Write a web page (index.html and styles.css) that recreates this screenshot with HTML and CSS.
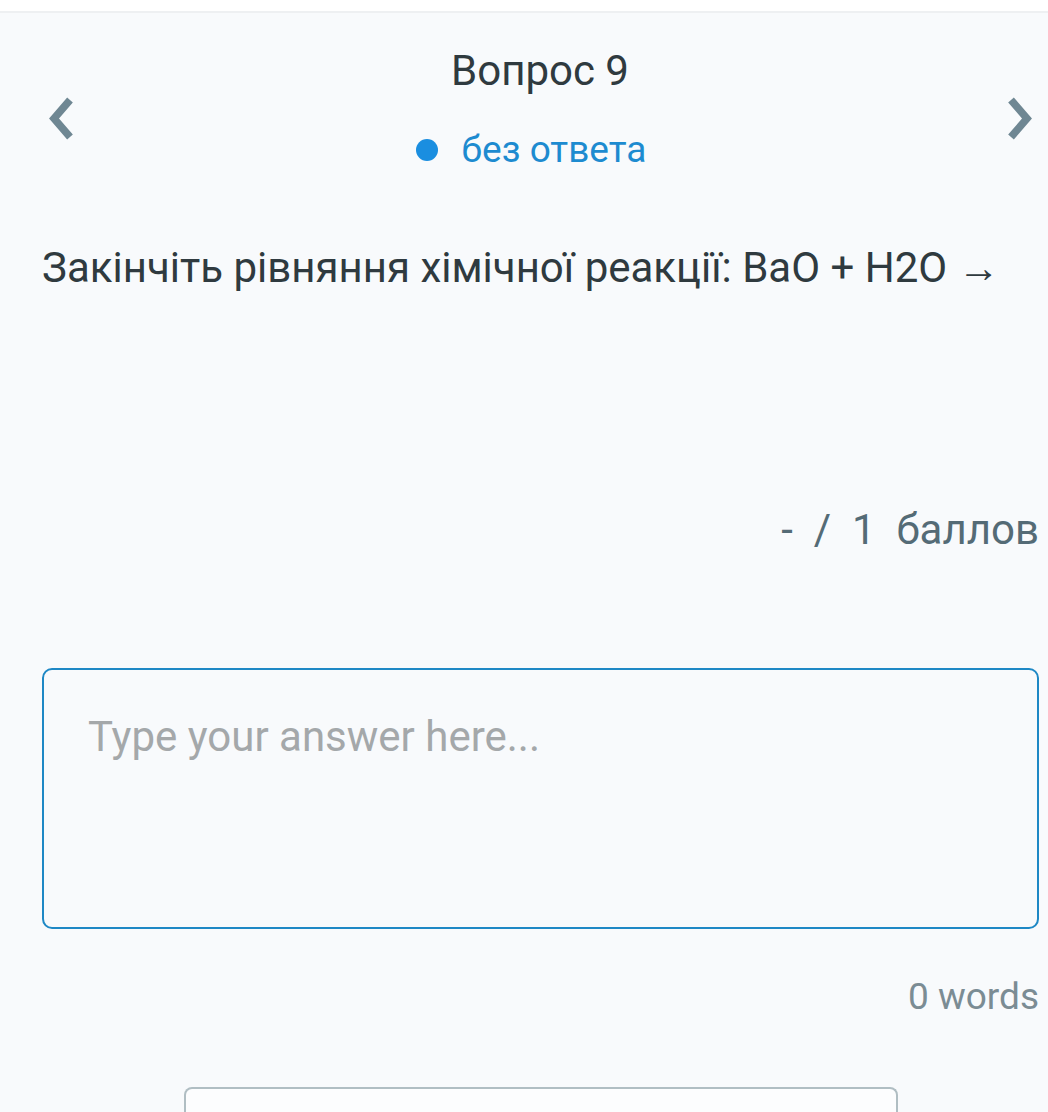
FILE: index.html
```html
<!DOCTYPE html>
<html>
<head>
<meta charset="utf-8">
<link rel="stylesheet" href="styles.css">
</head>
<body>
<div class="topbar"></div>
<main class="page">
  <div class="nav">
    <button class="arrow" aria-label="previous">
      <svg width="34" height="44" viewBox="0 0 34 44"><path d="M25 3 L9 21.5 L25 40" fill="none" stroke="#6f8793" stroke-width="7.5" stroke-linecap="butt" stroke-linejoin="miter"/></svg>
    </button>
    <div class="qhead">
      <div class="qtitle">Вопрос 9</div>
      <div class="status"><span class="dot"></span><span>без ответа</span></div>
    </div>
    <button class="arrow" aria-label="next">
      <svg width="34" height="44" viewBox="0 0 34 44"><path d="M10 3 L26 21.5 L10 40" fill="none" stroke="#6f8793" stroke-width="7.5" stroke-linecap="butt" stroke-linejoin="miter"/></svg>
    </button>
  </div>
  <p class="question">Закінчіть рівняння хімічної реакції: ВаО + Н2О →</p>
  <div class="points">-&nbsp;&nbsp;/&nbsp;&nbsp;1&nbsp;&nbsp;баллов</div>
  <div class="answer"><span class="placeholder">Type your answer here...</span></div>
  <div class="words">0 words</div>
  <div class="btnrow"><div class="submit"></div></div>
</main>
</body>
</html>
```
FILE: styles.css
```css
html, body {
  margin: 0;
  padding: 0;
  background: #f8fafc;
  font-family: Roboto, "Noto Sans", sans-serif;
  overflow: hidden;
}
.topbar {
  height: 11px;
  background: #ffffff;
  border-bottom: 2px solid #eef0f2;
}
.page {
  padding: 0 9px 0 42px;
}
.nav {
  display: flex;
  justify-content: space-between;
  align-items: flex-start;
  padding-top: 34px;
}
.arrow {
  background: none;
  border: 0;
  padding: 0;
  margin-top: 50px;
  width: 34px;
  height: 44px;
}
.arrow:first-child { margin-left: 3px; }
.arrow:last-child { margin-right: 4px; }
.qhead {
  display: flex;
  flex-direction: column;
  align-items: center;
}
.qtitle {
  font-size: 42px;
  line-height: 48px;
  color: #2f3a3f;
}
.status {
  display: flex;
  align-items: center;
  margin-top: 33px;
  margin-right: 18px;
  font-size: 37px;
  line-height: 44px;
  color: #1d8bd0;
}
.dot {
  width: 22px;
  height: 22px;
  border-radius: 50%;
  background: #1a8ee0;
  margin-right: 24px;
}
.question {
  margin: 72px 0 0 0;
  font-size: 42px;
  line-height: 48px;
  color: #2f3a3f;
}
.points {
  margin-top: 214px;
  text-align: right;
  font-size: 42px;
  line-height: 48px;
  color: #546b76;
}
.answer {
  margin-top: 114px;
  height: 257px;
  border: 2px solid #1e88c5;
  border-radius: 10px;
  padding: 0 44px;
}
.placeholder {
  display: block;
  margin-top: 43px;
  font-size: 42px;
  line-height: 48px;
  color: #a4a8aa;
}
.words {
  margin-top: 47px;
  text-align: right;
  font-size: 37px;
  line-height: 42px;
  color: #7b8c94;
}
.btnrow {
  display: flex;
  justify-content: center;
  margin-top: 69px;
}
.submit {
  width: 710px;
  height: 23px;
  border: 2px solid #b0bec3;
  border-bottom: 0;
  border-radius: 8px 8px 0 0;
  background: #fcfdfe;
}
```
